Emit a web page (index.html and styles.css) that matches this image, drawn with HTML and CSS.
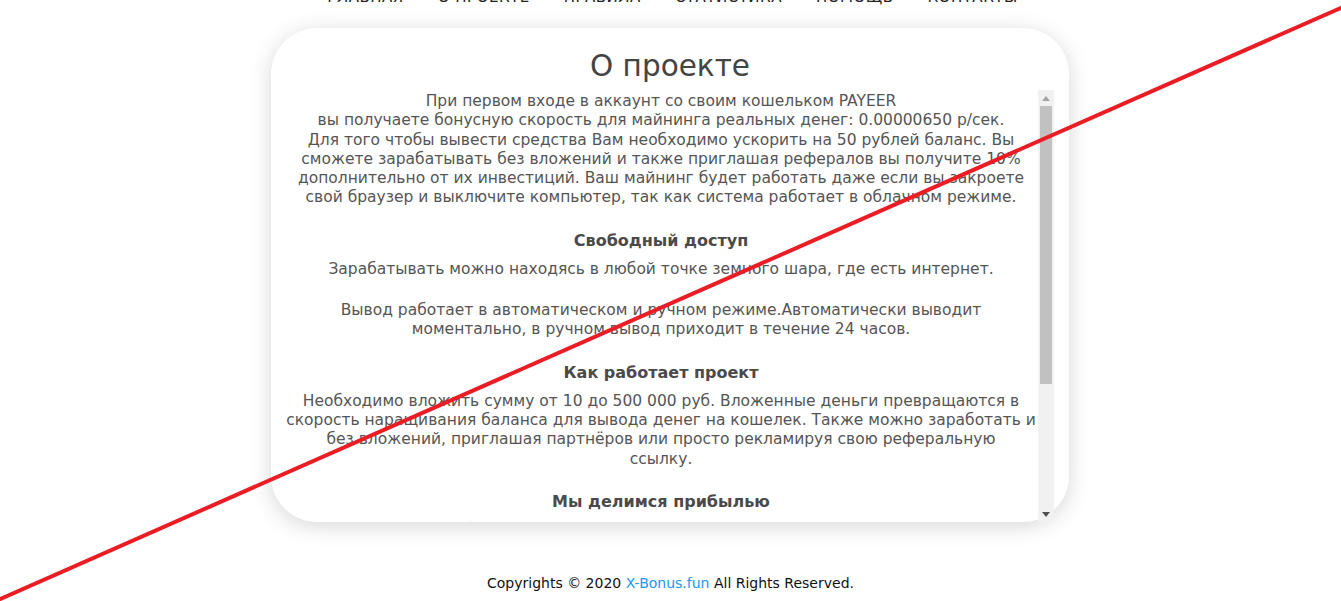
FILE: index.html
```html
<!DOCTYPE html>
<html lang="ru">
<head>
<meta charset="utf-8">
<title>О проекте</title>
<link rel="stylesheet" href="styles.css">
</head>
<body>
<nav class="nav">
  <a href="#">Главная</a>
  <a href="#">О проекте</a>
  <a href="#">Правила</a>
  <a href="#">Статистика</a>
  <a href="#">Помощь</a>
  <a href="#">Контакты</a>
</nav>
<main class="card">
  <h1 class="title">О проекте</h1>
  <div class="scroll-area">
    <div class="scroll">
      <p>При первом входе в аккаунт со своим кошельком PAYEER<br>вы получаете бонусную скорость для майнинга реальных денег: 0.00000650 р/сек.<br>Для того чтобы вывести средства Вам необходимо ускорить на 50 рублей баланс. Вы<br>сможете зарабатывать без вложений и также приглашая рефералов вы получите 10%<br>дополнительно от их инвестиций. Ваш майнинг будет работать даже если вы закроете<br>свой браузер и выключите компьютер, так как система работает в облачном режиме.</p>
      <h3>Свободный доступ</h3>
      <p>Зарабатывать можно находясь в любой точке земного шара, где есть интернет.</p>
      <p>Вывод работает в автоматическом и ручном режиме.Автоматически выводит<br>моментально, в ручном вывод приходит в течение 24 часов.</p>
      <h3>Как работает проект</h3>
      <p>Необходимо вложить сумму от 10 до 500 000 руб. Вложенные деньги превращаются в<br>скорость наращивания баланса для вывода денег на кошелек. Также можно заработать и<br>без вложений, приглашая партнёров или просто рекламируя свою реферальную<br>ссылку.</p>
      <h3>Мы делимся прибылью</h3>
      <p>Часть прибыли проекта распределяется между всеми участниками<br>пропорционально их скорости майнинга. Чем выше ваша скорость,<br>тем больше вы получаете.</p>
    </div>
    <div class="scrollbar" aria-hidden="true">
      <div class="sb-btn">
        <svg width="8" height="5" viewBox="0 0 8 5"><polygon points="0,5 8,5 4,0" fill="#a3a3a3"/></svg>
      </div>
      <div class="sb-track">
        <div class="sb-thumb"></div>
      </div>
      <div class="sb-btn">
        <svg width="8" height="5" viewBox="0 0 8 5"><polygon points="0,0 8,0 4,5" fill="#505050"/></svg>
      </div>
    </div>
  </div>
</main>
<footer class="footer">Copyrights © 2020 <a href="#">X-Bonus.fun</a> All Rights Reserved.</footer>
<svg class="strike" width="1341" height="601" viewBox="0 0 1341 601" aria-hidden="true">
  <line x1="-2" y1="600" x2="1343" y2="7" stroke="#ec1c24" stroke-width="4"/>
</svg>
</body>
</html>
```

FILE: styles.css
```css
html, body {
  margin: 0;
  padding: 0;
  background: #fff;
  overflow: hidden;
}
body {
  font-family: "DejaVu Sans", "Liberation Sans", sans-serif;
  color: #555;
  height: 601px;
}
.nav {
  display: flex;
  justify-content: center;
  gap: 34px;
  margin-top: -13px;
  height: 20px;
  line-height: 20px;
  font-size: 15px;
  text-transform: uppercase;
  letter-spacing: 0.5px;
  padding-left: 4px;
}
.nav a {
  color: #222;
  text-decoration: none;
}
.card {
  width: 798px;
  height: 494px;
  box-sizing: border-box;
  margin: 21px auto 0;
  padding: 20px 15px 0 14px;
  background: #fff;
  border-radius: 46px;
  box-shadow: 0 4px 22px rgba(0, 0, 0, 0.16);
  display: flex;
  flex-direction: column;
  position: relative;
  left: -1px;
}
.title {
  margin: 0 0 6px;
  font-size: 29.5px;
  line-height: 36px;
  font-weight: normal;
  color: #444;
  text-align: center;
  padding-left: 2px;
}
.scroll-area {
  flex: 1;
  min-height: 0;
  display: flex;
}
.scroll {
  flex: 1;
  min-width: 0;
  overflow: hidden;
  text-align: center;
  font-size: 15.5px;
  line-height: 19.3px;
  padding-top: 2px;
}
.scroll p {
  margin: 0 0 22px;
}
.scroll h3 {
  margin: 0 0 8px;
  font-size: 16px;
  line-height: 22px;
  font-weight: bold;
  color: #4a4a4a;
}
.scrollbar {
  width: 16px;
  flex: none;
  display: flex;
  flex-direction: column;
  background: #f1f1f1;
}
.sb-btn {
  height: 16px;
  flex: none;
  display: flex;
  align-items: center;
  justify-content: center;
}
.sb-btn svg {
  display: block;
}
.sb-track {
  flex: 1;
  display: flex;
  flex-direction: column;
}
.sb-thumb {
  height: 278px;
  margin: 0 2px;
  background: #c1c1c1;
}
.footer {
  text-align: center;
  margin-top: 52px;
  font-size: 14px;
  line-height: 18px;
  color: #111;
}
.footer a {
  color: #2196f3;
  text-decoration: none;
}
.strike {
  position: fixed;
  left: 0;
  top: 0;
  pointer-events: none;
}
```
